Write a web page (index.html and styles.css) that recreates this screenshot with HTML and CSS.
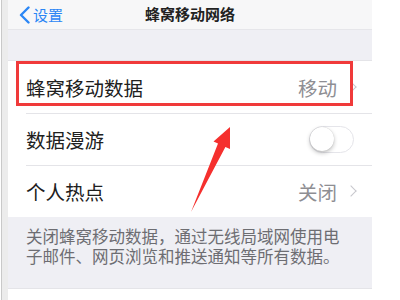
FILE: index.html
```html
<!DOCTYPE html>
<html lang="zh-CN">
<head>
  <meta charset="UTF-8">
  <meta name="viewport" content="width=device-width, initial-scale=1">
  <title>蜂窝移动网络</title>
  <link rel="stylesheet" href="styles.css">
</head>
<body>

<div class="frame">
  <div class="edge"></div>

  <div class="screen">
    <header class="nav">
      <a class="back" href="#">
        <svg width="11" height="18" viewBox="0 0 11 18"><path d="M9.5 1.5 L2 9 L9.5 16.5" fill="none" stroke="#2b86f5" stroke-width="2.4" stroke-linecap="round" stroke-linejoin="round"/></svg>
        <span>设置</span>
      </a>
      <h1>蜂窝移动网络</h1>
    </header>

    <div class="band"></div>

    <ul class="group">
      <li class="cell">
        <span class="label">蜂窝移动数据</span>
        <span class="value">移动</span>
        <span class="chev"></span>
      </li>
      <li class="cell">
        <span class="label">数据漫游</span>
        <span class="switch"><span class="knob"></span></span>
      </li>
      <li class="cell">
        <span class="label">个人热点</span>
        <span class="value">关闭</span>
        <span class="chev"></span>
      </li>
    </ul>

    <p class="footer">关闭蜂窝移动数据，通过无线局域网使用电子邮件、网页浏览和推送通知等所有数据。</p>

    <div class="next"></div>

    <!-- annotation drawn over the screenshot -->
    <div class="mark"></div>
    <svg class="arrow" width="364" height="300" viewBox="8 0 364 300">
      <polygon points="191,212 218,143.5 213.5,141.5 230,127 230,149 225.4,146.9" fill="#f5302e"/>
    </svg>
  </div>
</div>

</body>
</html>
```

FILE: styles.css
```css
* {
  margin: 0;
  padding: 0;
  box-sizing: border-box;
}

body {
  font-family: "Noto Sans CJK SC", "Noto Sans", sans-serif;
  background-color: #fff;
  color: #1c1c1c;
  width: 400px;
  height: 300px;
  overflow: hidden;
}

.frame {
  display: flex;
  height: 300px;
  overflow: hidden;
}

.edge {
  width: 8px;
  background-color: #ececec;
  border-left: 1px solid #fff;
  box-shadow: inset 1px 0 0 #c9c9c9;
}

.screen {
  position: relative;
  width: 364px;
  height: 300px;
  overflow: hidden;
  background-color: #efeff4;
}

/* Navigation bar */
.nav {
  height: 30px;
  display: flex;
  align-items: center;
  justify-content: center;
  position: relative;
  background-color: #f7f7f8;
  border-bottom: 1px solid #e6e6ea;
}

.back {
  position: absolute;
  left: 11px;
  top: 4px;
  display: flex;
  align-items: center;
  gap: 3px;
  color: #2b86f5;
  text-decoration: none;
  font-size: 15px;
}

.nav h1 {
  font-size: 15px;
  font-weight: 600;
  color: #222;
  margin-top: -3px;
}

.band {
  height: 30px;
}

/* Table cells */
.group {
  list-style: none;
  background-color: #fff;
  border-top: 1px solid #e4e4e8;
}

.cell {
  height: 52px;
  display: flex;
  align-items: center;
  padding: 0 17px 0 18px;
  position: relative;
  background-color: #fff;
}

.cell + .cell::before {
  content: "";
  position: absolute;
  top: 0;
  left: 18px;
  right: 0;
  border-top: 1px solid #e4e4e8;
}

.label {
  flex: 1;
  font-size: 19.5px;
  color: #202020;
}

.value {
  font-size: 19.5px;
  color: #8e8e93;
}

.chev {
  width: 8px;
  height: 8px;
  margin-left: 10px;
  border-top: 1.5px solid #c7c7cc;
  border-right: 1.5px solid #c7c7cc;
  transform: rotate(45deg);
}

.switch {
  width: 45px;
  height: 27px;
  border-radius: 14px;
  border: 1.5px solid #e5e5ea;
  background-color: #fff;
  margin-right: 1px;
  position: relative;
}

.knob {
  position: absolute;
  top: 0;
  left: 0;
  width: 24px;
  height: 24px;
  border-radius: 50%;
  background-color: #fff;
  box-shadow: 0 2px 4px rgba(0, 0, 0, 0.25), 0 0 1px rgba(0, 0, 0, 0.2);
}

.footer {
  height: 71px;
  padding: 10px 20px 0 18px;
  font-size: 16.5px;
  line-height: 19.5px;
  color: #6d6d72;
}

.next {
  height: 12px;
  background-color: #fff;
  border-top: 1px solid #e4e4e8;
}

/* Red annotation */
.mark {
  position: absolute;
  left: 8px;
  top: 61px;
  width: 337px;
  height: 45px;
  border: 3px solid #f03a3a;
}

.arrow {
  position: absolute;
  left: 0;
  top: 0;
}
```
